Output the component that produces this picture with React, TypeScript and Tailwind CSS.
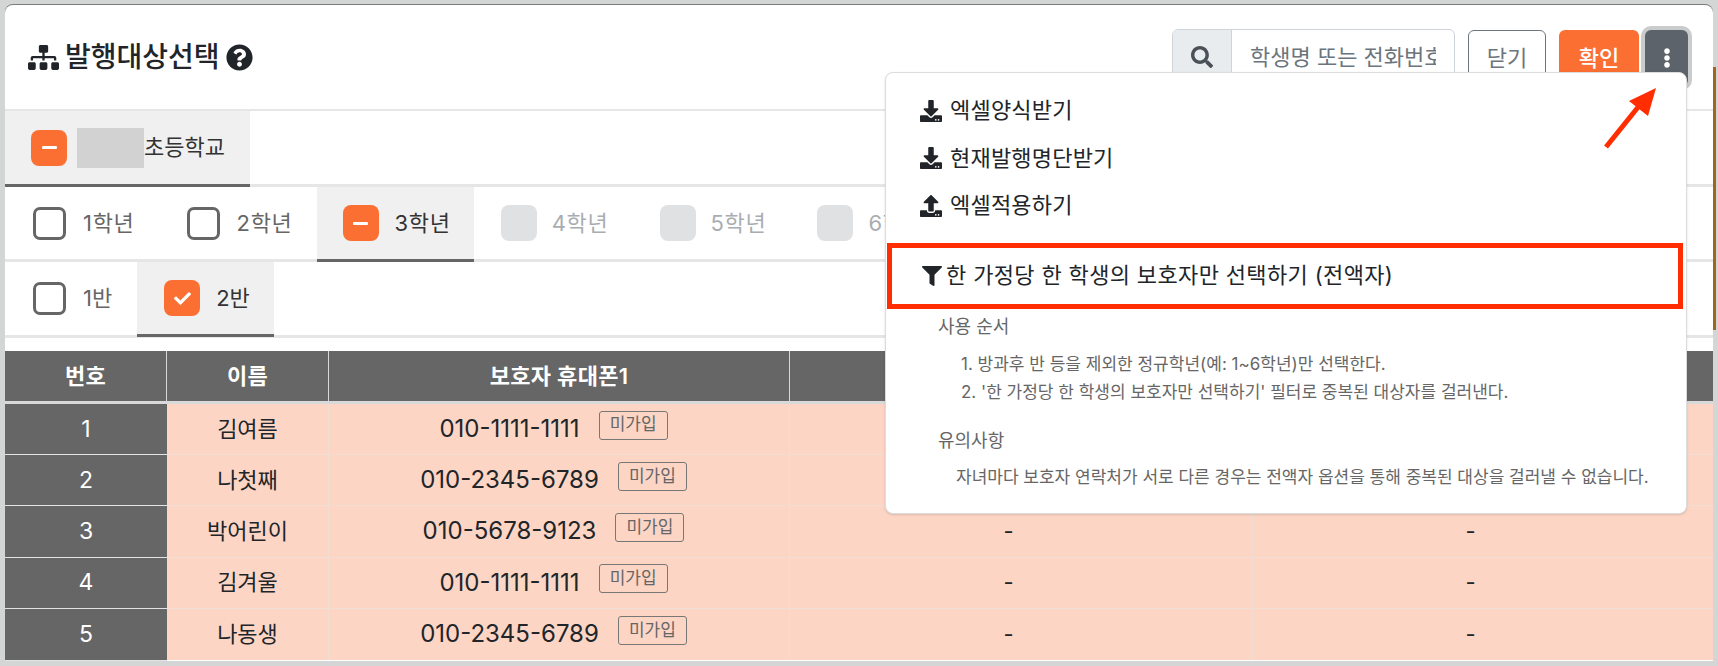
import { FaSitemap, FaQuestionCircle, FaSearch, FaDownload, FaUpload, FaFilter, FaEllipsisV, FaCheck, FaMinus } from "react-icons/fa";

type BoxState = "empty" | "minus" | "check" | "disabled";

function Box({ state }: { state: BoxState }) {
  if (state === "empty") {
    return <span className="block h-[33px] w-[33px] rounded-[7px] border-[3px] border-[#666666]" />;
  }
  if (state === "disabled") {
    return <span className="block h-[36px] w-[36px] rounded-lg bg-[#dfe1e3]" />;
  }
  return (
    <span className="flex h-[36px] w-[36px] items-center justify-center rounded-lg bg-[#fb6f33] text-white">
      {state === "minus" ? <FaMinus size={17} /> : <FaCheck size={17} />}
    </span>
  );
}

function Tab({ label, state, spaced = true }: { label: string; state: BoxState; spaced?: boolean }) {
  const active = state === "minus" || state === "check";
  const activeClass = spaced
    ? "-mb-[3px] flex h-[75px] items-center gap-4 border-b-[3px] border-[#666666] bg-[#f0f0f0] pl-[26px] pr-[23px] text-[#333333]"
    : "-mb-[3px] flex h-[75px] items-center gap-4 border-b-[3px] border-[#666666] bg-[#f0f0f0] pl-[27px] pr-[24px] text-[#333333]";
  const emptyClass = spaced
    ? "flex h-[72px] items-center gap-[17px] pl-[28px] pr-[24px] text-[#666666]"
    : "flex h-[72px] items-center gap-[17px] pl-[28px] pr-[25px] text-[#666666]";
  return (
    <div
      className={
        active
          ? activeClass
          : state === "disabled"
            ? "flex h-[72px] items-center gap-[15px] pl-[27px] pr-[24px] text-[#a9adb1]"
            : emptyClass
      }
    >
      <Box state={state} />
      <span className={spaced ? "tracking-[0.7px]" : ""}>{label}</span>
    </div>
  );
}

const students = [
  ["1", "김여름", "010-1111-1111"],
  ["2", "나첫째", "010-2345-6789"],
  ["3", "박어린이", "010-5678-9123"],
  ["4", "김겨울", "010-1111-1111"],
  ["5", "나동생", "010-2345-6789"],
];

const cols = "grid grid-cols-[162px_162px_461px_463px_460px]";

export default function App() {
  return (
    <div className="relative h-[666px] w-[1718px] overflow-hidden bg-[#d4d5d5] pl-[5px] pt-[5px] font-['Inter','Noto_Sans_CJK_KR',sans-serif] text-[22px] text-[#212529]">
      <div className="absolute right-[2px] top-[67px] h-[263px] w-[4px] bg-[#a0661f]" />
      <div className="relative h-[656px] w-[1708px] rounded-t-lg bg-white shadow-[0_-1px_0_#7a7a7a]">
        {/* header */}
        <div className="flex h-[106px] border-b-2 border-[#e6e6e6] pl-[23px] pr-[25px] pt-[24px]">
          <div className="flex h-[56px] items-center">
            <FaSitemap size={31} className="shrink-0 text-[#212529]" />
            <h1 className="ml-[6px] text-[28px] font-medium">발행대상선택</h1>
            <FaQuestionCircle size={27} className="ml-[6px] shrink-0 text-[#212529]" />
          </div>
          <div className="ml-auto flex h-[56px] items-start">
            <div className="flex h-[56px] w-[283px] overflow-hidden rounded-md border border-[#ced4da]">
              <span className="flex w-[59px] items-center justify-center border-r border-[#ced4da] bg-[#e9ecef] text-[#495057]">
                <FaSearch size={22} />
              </span>
              <input
                readOnly
                placeholder="학생명 또는 전화번호 검색"
                className="min-w-0 flex-1 px-[18px] text-[22px] outline-none placeholder:text-[#6c757d]"
              />
            </div>
            <button className="ml-[13px] mt-px h-[56px] w-[78px] rounded-md border border-[#6c757d] text-[#6c757d]">닫기</button>
            <button className="ml-[13px] mt-px h-[56px] w-[80px] rounded-md bg-[#fb6f33] font-medium text-white">확인</button>
            <button className="ml-[6px] mt-px flex h-[56px] w-[43px] items-center justify-center rounded-md bg-[#5c636a] text-white ring-4 ring-[#c9cbcd]">
              <FaEllipsisV size={20} />
            </button>
          </div>
        </div>

        {/* selection rows */}
        <div className="flex h-[76px] border-b-[3px] border-[#e6e6e6]">
          <div className="-mb-[3px] flex h-[76px] items-center border-b-[3px] border-[#666666] bg-[#f0f0f0] pl-[26px] pr-[25px] text-[#333333]">
            <Box state="minus" />
            <span className="ml-[10px] h-[40px] w-[67px] bg-[#d2d2d2]" />
            <span>초등학교</span>
          </div>
        </div>
        <div className="flex h-[75px] border-b-[3px] border-[#e6e6e6]">
          <Tab label="1학년" state="empty" />
          <Tab label="2학년" state="empty" />
          <Tab label="3학년" state="minus" />
          <Tab label="4학년" state="disabled" />
          <Tab label="5학년" state="disabled" />
          <Tab label="6학년" state="disabled" />
        </div>
        <div className="flex h-[76px] border-b-[3px] border-[#e6e6e6]">
          <Tab label="1반" state="empty" spaced={false} />
          <Tab label="2반" state="check" spaced={false} />
        </div>

        {/* table */}
        <div className="mt-[13px]">
          <div className={`${cols} h-[53px] border-b-[3px] border-[#d9d9d9] bg-[#666666] font-semibold text-white`}>
            {["번호", "이름", "보호자 휴대폰1", "", ""].map((h, i) => (
              <div key={i} className="flex items-center justify-center border-r border-[#d8d8d8] tracking-[0.3px] last:border-r-0">
                {h}
              </div>
            ))}
          </div>
          {students.map(([no, name, phone], i) => (
            <div key={no} className={`${cols} h-[51.2px] border-b border-[#f0ddd3] bg-[#fcd5c5] last:border-b-0`}>
              <div className="-mb-px flex items-center justify-center border-b border-[#e3e3e3] bg-[#666666] text-[23px] text-white">{no}</div>
              <div className="flex items-center justify-center border-r border-[#f0ddd3]">{name}</div>
              <div className="flex items-center justify-center gap-[19px] border-r border-[#f0ddd3] pr-[11px]">
                <span className="text-[24px]">{phone}</span>
                <span className="mb-[8px] flex h-[29px] w-[69px] items-center justify-center rounded-[3px] border border-[#777777] text-[17px] text-[#666666]">
                  미가입
                </span>
              </div>
              <div className="flex items-center justify-center border-r border-[#f0ddd3] pr-[25px]">{i > 1 ? "-" : ""}</div>
              <div className="flex items-center justify-center pr-[25px]">{i > 1 ? "-" : ""}</div>
            </div>
          ))}
        </div>

        {/* dropdown */}
        <div className="absolute right-[26px] top-[67px] h-[442px] w-[802px] rounded-lg border border-[#dcdcdc] bg-white pl-px pr-[3px] pt-[14px] shadow-sm">
          {[
            [FaDownload, "엑셀양식받기"],
            [FaDownload, "현재발행명단받기"],
            [FaUpload, "엑셀적용하기"],
          ].map(([Icon, label], i) => {
            const I = Icon as typeof FaDownload;
            return (
              <div key={i} className="flex h-[47.5px] items-center gap-[8px] pl-[33px]">
                <I size={22} />
                <span className="tracking-[0.2px]">{label as string}</span>
              </div>
            );
          })}
          <div className="mt-[13px] flex h-[66px] items-center gap-[4px] border-[5px] border-[#ff2d00] pl-[30px]">
            <FaFilter size={20} />
            <span className="tracking-[0.35px]">한 가정당 한 학생의 보호자만 선택하기 (전액자)</span>
          </div>
          <div className="pl-[51px] text-[#666666]">
            <p className="mt-[4px] text-[18px]">사용 순서</p>
            <ol className="ml-[23px] mt-[10px] text-[17px] leading-[28px]">
              <li>1. 방과후 반 등을 제외한 정규학년(예: 1~6학년)만 선택한다.</li>
              <li>2. '한 가정당 한 학생의 보호자만 선택하기' 필터로 중복된 대상자를 걸러낸다.</li>
            </ol>
            <p className="mt-[21px] text-[18px]">유의사항</p>
            <p className="ml-[18px] mt-[11px] text-[17px]">자녀마다 보호자 연락처가 서로 다른 경우는 전액자 옵션을 통해 중복된 대상을 걸러낼 수 없습니다.</p>
          </div>
        </div>

        {/* annotation arrow */}
        <svg className="absolute left-[1596px] top-[78px]" width="60" height="70" viewBox="0 0 60 70">
          <line x1="5" y1="64" x2="42" y2="18" stroke="#ff2d00" strokeWidth="5" />
          <polygon points="55,5 47,33 28,18" fill="#ff2d00" />
        </svg>
      </div>
    </div>
  );
}
